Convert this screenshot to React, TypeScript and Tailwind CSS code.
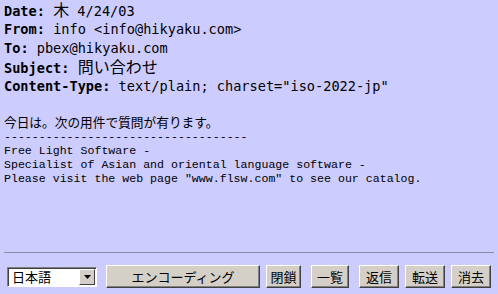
import React from 'react';

const mono = "font-['DejaVu_Sans_Mono','Noto_Sans_CJK_JP',monospace]";
const cjk = "font-['Noto_Sans_CJK_JP',sans-serif]";

const HeaderLine: React.FC<{ label: string; children: React.ReactNode }> = ({ label, children }) => (
  <div className="h-[19px] leading-[19px] whitespace-pre">
    <span className="font-bold">{label}:</span> {children}
  </div>
);

const Jp: React.FC<{ children: React.ReactNode }> = ({ children }) => (
  <span className={`${cjk} text-[16px] leading-[16px]`}>{children}</span>
);

const WinButton: React.FC<{ label: string; className?: string }> = ({ label, className }) => (
  <button
    className={`h-[23px] bg-[#d4d0c8] border border-t-white border-l-white border-r-[#404040] border-b-[#404040] shadow-[inset_-1px_-1px_0_#808080] text-[13px] leading-none text-black ${cjk} ${className ?? ''}`}
  >
    {label}
  </button>
);

export default function App() {
  return (
    <div className="w-[498px] h-[294px] bg-[#ccccff] text-black flex flex-col overflow-hidden">
      <div className={`${mono} text-[13.6px] pl-[4px] pt-[1px]`}>
        <HeaderLine label="Date"><Jp>木</Jp> 4/24/03</HeaderLine>
        <HeaderLine label="From">info &lt;info@hikyaku.com&gt;</HeaderLine>
        <HeaderLine label="To">pbex@hikyaku.com</HeaderLine>
        <HeaderLine label="Subject"><Jp>問い合わせ</Jp></HeaderLine>
        <HeaderLine label="Content-Type">text/plain; charset="iso-2022-jp"</HeaderLine>
      </div>

      <div className="mt-[18px] pl-[4px] font-['Liberation_Mono','Noto_Sans_CJK_JP',monospace] text-[11.6px] leading-[14px] whitespace-pre">
        <div className={`${cjk} text-[12.7px] h-[16px] leading-[16px]`}>今日は。次の用件で質問が有ります。</div>
        <div>-----------------------------------</div>
        <div>Free Light Software -</div>
        <div>Specialist of Asian and oriental language software -</div>
        <div>Please visit the web page "www.flsw.com" to see our catalog.</div>
      </div>

      <div className="mt-auto border-t border-t-[#8c8ca8] mx-[4px] mb-[12px]" />

      <div className="flex items-center h-[23px] mb-[6px] pl-[7px]">
        <div className="w-[90px] h-[20px] bg-white border border-t-[#808080] border-l-[#808080] border-r-white border-b-white shadow-[inset_1px_1px_0_#404040] flex items-center">
          <span className={`${cjk} text-[13px] pl-[4px] flex-1 leading-none`}>日本語</span>
          <div className="w-[16px] h-[16px] mr-[1px] bg-[#d4d0c8] border border-t-white border-l-white border-r-[#404040] border-b-[#404040] flex items-center justify-center">
            <svg width="7" height="4" viewBox="0 0 7 4"><path d="M0 0h7L3.5 4z" fill="#000" /></svg>
          </div>
        </div>
        <WinButton label="エンコーディング" className="w-[154px] ml-[9px]" />
        <WinButton label="閉鎖" className="w-[35px] ml-[6px]" />
        <WinButton label="一覧" className="w-[38px] ml-[10px]" />
        <WinButton label="返信" className="w-[40px] ml-[10px]" />
        <WinButton label="転送" className="w-[40px] ml-[6px]" />
        <WinButton label="消去" className="w-[40px] ml-[6px]" />
      </div>
    </div>
  );
}
